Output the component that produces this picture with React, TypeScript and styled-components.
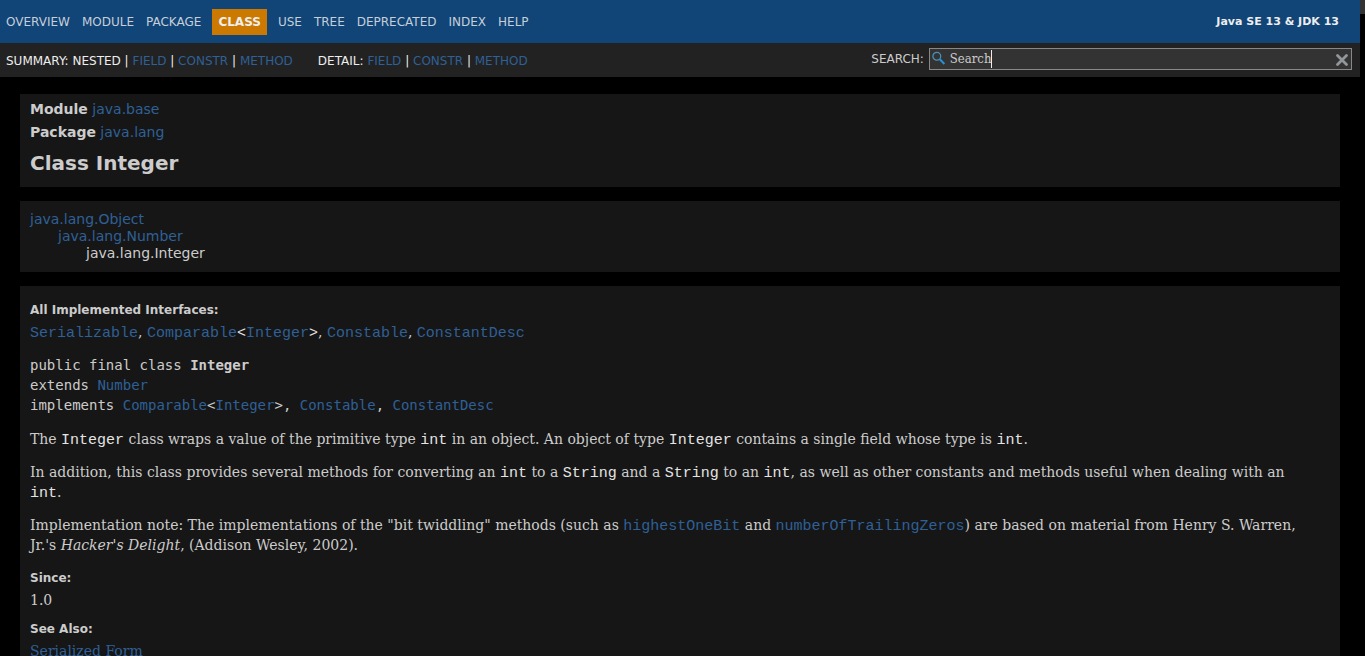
import React, { useState } from 'react';
import styled, { createGlobalStyle } from 'styled-components';

const sans = `'DejaVu Sans', Arial, Helvetica, sans-serif`;
const serif = `'DejaVu Serif', Georgia, serif`;
const narrowSerif = `'DejaVu Serif Condensed', 'DejaVu Serif', serif`;
const mono = `'DejaVu Sans Mono', monospace`;

const GlobalStyle = createGlobalStyle`
  * { box-sizing: border-box; }
  body {
    margin: 0;
    background: #000;
    color: #ccc;
    font-family: ${sans};
    font-size: 14px;
  }
  p, h1, ul, dl, dd, pre { margin: 0; padding: 0; }
  ul { list-style: none; }
`;

const Shell = styled.div`
  display: flex;
  height: 100vh;
  overflow: hidden;
`;

const Page = styled.div`
  flex: 1;
  min-width: 0;
  display: flex;
  flex-direction: column;
`;

const ScrollTrack = styled.div`
  flex: none;
  width: 5px;
  background: #000;
`;

const ScrollThumb = styled.div`
  height: 14px;
  background: #333;
`;

const Link = styled.a`
  color: #2f6096;
  text-decoration: none;
`;

const TopBar = styled.nav`
  flex: none;
  display: flex;
  justify-content: space-between;
  padding: 9px 21px 8px 0;
  background: #114477;
`;

const NavList = styled.ul`
  display: flex;
`;

const NavItem = styled.li<{ $active?: boolean }>`
  padding: 5px 6px;
  font-size: 12px;
  line-height: 16px;
  ${({ $active }) =>
    $active &&
    `margin: 0 5px; background: #cb7900; color: #eee; font-weight: bold;`}
`;

const NavLink = styled.a`
  color: #c5cfd9;
  text-decoration: none;
`;

const Release = styled.strong`
  padding: 5px 0;
  font-size: 11px;
  line-height: 16px;
  color: #eee;
`;

const SubBar = styled.div`
  flex: none;
  display: flex;
  justify-content: space-between;
  align-items: flex-start;
  padding: 5px 8px 5px 6px;
  background: #222;
  color: #eee;
  font-size: 12px;
  line-height: 22px;
`;

const SubNav = styled.div`
  display: flex;
  gap: 25px;
  padding-top: 2px;
`;

const SearchForm = styled.form`
  display: flex;
  gap: 5px;
  height: 22px;
  color: #ccc;
`;

const SearchBox = styled.div`
  display: flex;
  align-items: center;
  width: 31vw;
  height: 22px;
  padding: 0 2px;
  border: 1px solid #888;
  background: #333;
`;

const SearchInput = styled.input`
  field-sizing: content;
  height: 20px;
  margin-left: 4px;
  padding: 0;
  border: 0;
  outline: 0;
  background: transparent;
  color: #ccc;
  font-family: ${narrowSerif};
  font-size: 13px;
  line-height: 20px;
`;

const Caret = styled.span`
  width: 1px;
  height: 18px;
  background: #eee;
`;

const ClearButton = styled.button`
  display: flex;
  margin-left: auto;
  padding: 2px 0 0;
  border: 0;
  background: transparent;
`;

const Content = styled.main`
  flex: 1;
  min-height: 0;
  overflow: auto;
  scrollbar-width: none;
  display: flex;
  flex-direction: column;
  gap: 14px;
  padding: 17px 20px 0;
`;

const Card = styled.section`
  flex: none;
  padding: 4px 10px 9px;
  background: #161616;
`;

const SubTitle = styled.div`
  line-height: 23px;
`;

const Title = styled.h1`
  margin-top: 4px;
  font-size: 20px;
  line-height: 30px;
`;

const TreeCard = styled(Card)`
  padding: 10px;
  line-height: 17px;
`;

const Tree = styled.ul<{ $nested?: boolean }>`
  padding-left: ${({ $nested }) => ($nested ? 28 : 0)}px;
`;

const DescCard = styled(Card)`
  padding: 14px 30px 14px 10px;
`;

const Term = styled.dt`
  font-size: 12px;
  font-weight: bold;
  line-height: 20px;
`;

const Detail = styled.dd`
  padding-top: 2px;
  font-family: ${serif};
  line-height: 20px;

  &:not(:last-child) {
    padding-bottom: 9px;
  }
`;

const Signature = styled.pre`
  margin: 13px 0 14px;
  font-family: ${mono};
  font-size: 14px;
  line-height: 20px;
`;

const Paragraph = styled.p`
  margin-bottom: 13px;
  font-family: ${serif};
  line-height: 20px;
`;

const Code = styled.code<{ $linked?: boolean }>`
  color: ${({ $linked }) => ($linked ? 'inherit' : '#e4e4e4')};
  font-family: 'Liberation Mono', 'Courier New', monospace;
  font-size: 15px;
  line-height: 16px;
`;

const navBefore = ['OVERVIEW', 'MODULE', 'PACKAGE'];
const navAfter = ['USE', 'TREE', 'DEPRECATED', 'INDEX', 'HELP'];
const sections = ['FIELD', 'CONSTR', 'METHOD'];

const NavLinks = ({ names }: { names: string[] }) => (
  <>
    {names.map((n) => (
      <NavItem key={n}>
        <NavLink href="#">{n}</NavLink>
      </NavItem>
    ))}
  </>
);

const JumpLinks = () => (
  <>
    {sections.map((n, i) => (
      <React.Fragment key={n}>
        {i > 0 && ' | '}
        <Link href="#">{n}</Link>
      </React.Fragment>
    ))}
  </>
);

const CodeLink = ({ children }: { children: string }) => (
  <Link href="#">
    <Code $linked>{children}</Code>
  </Link>
);

export default function App() {
  const [query, setQuery] = useState('Search');
  return (
    <>
      <GlobalStyle />
      <Shell>
        <Page>
          <TopBar>
            <NavList>
              <NavLinks names={navBefore} />
              <NavItem $active>CLASS</NavItem>
              <NavLinks names={navAfter} />
            </NavList>
            <Release>Java SE 13 &amp; JDK 13</Release>
          </TopBar>
          <SubBar>
            <SubNav>
              <div>
                SUMMARY: NESTED | <JumpLinks />
              </div>
              <div>
                DETAIL: <JumpLinks />
              </div>
            </SubNav>
            <SearchForm onSubmit={(e) => e.preventDefault()}>
              <label htmlFor="search">SEARCH:</label>
              <SearchBox>
                <svg width="14" height="16" viewBox="0 0 14 16" fill="none" aria-hidden="true">
                  <circle cx="4.8" cy="5.3" r="3.9" stroke="#4a8fb5" strokeWidth="1.3" />
                  <path d="M7.8 8.3 12.4 13" stroke="#2492d6" strokeWidth="2" />
                </svg>
                <SearchInput
                  id="search"
                  type="text"
                  autoComplete="off"
                  value={query}
                  onChange={(e) => setQuery(e.target.value)}
                />
                <Caret />
                <ClearButton type="button" aria-label="Clear" onClick={() => setQuery('')}>
                  <svg width="14" height="14" viewBox="0 0 14 14" fill="none" aria-hidden="true">
                    <path d="M2.5 2.5 11.5 11.5M11.5 2.5 2.5 11.5" stroke="#92979b" strokeWidth="2.8" strokeLinecap="round" />
                  </svg>
                </ClearButton>
              </SearchBox>
            </SearchForm>
          </SubBar>
          <Content>
            <Card>
              <SubTitle><b>Module</b> <Link href="#">java.base</Link></SubTitle>
              <SubTitle><b>Package</b> <Link href="#">java.lang</Link></SubTitle>
              <Title>Class Integer</Title>
            </Card>
            <TreeCard>
              <Tree>
                <li>
                  <Link href="#">java.lang.Object</Link>
                  <Tree $nested>
                    <li>
                      <Link href="#">java.lang.Number</Link>
                      <Tree $nested>
                        <li>java.lang.Integer</li>
                      </Tree>
                    </li>
                  </Tree>
                </li>
              </Tree>
            </TreeCard>
            <DescCard>
              <dl>
                <Term>All Implemented Interfaces:</Term>
                <Detail>
                  <CodeLink>Serializable</CodeLink>, <CodeLink>Comparable</CodeLink>
                  <Code>&lt;</Code><CodeLink>Integer</CodeLink><Code>&gt;</Code>,{' '}
                  <CodeLink>Constable</CodeLink>, <CodeLink>ConstantDesc</CodeLink>
                </Detail>
              </dl>
              <Signature>
                public final class <b>Integer</b>{'\n'}
                extends <Link href="#">Number</Link>{'\n'}
                implements <Link href="#">Comparable</Link>&lt;<Link href="#">Integer</Link>&gt;,{' '}
                <Link href="#">Constable</Link>, <Link href="#">ConstantDesc</Link>
              </Signature>
              <Paragraph>
                The <Code>Integer</Code> class wraps a value of the primitive type <Code>int</Code> in
                an object. An object of type <Code>Integer</Code> contains a single field whose type
                is <Code>int</Code>.
              </Paragraph>
              <Paragraph>
                In addition, this class provides several methods for converting an <Code>int</Code> to
                a <Code>String</Code> and a <Code>String</Code> to an <Code>int</Code>, as well as
                other constants and methods useful when dealing with an <Code>int</Code>.
              </Paragraph>
              <Paragraph>
                Implementation note: The implementations of the "bit twiddling" methods (such
                as <CodeLink>highestOneBit</CodeLink> and <CodeLink>numberOfTrailingZeros</CodeLink>)
                are based on material from Henry S. Warren, Jr.'s <i>Hacker's Delight</i>, (Addison
                Wesley, 2002).
              </Paragraph>
              <dl>
                <Term>Since:</Term>
                <Detail>1.0</Detail>
                <Term>See Also:</Term>
                <Detail><Link href="#">Serialized Form</Link></Detail>
              </dl>
            </DescCard>
          </Content>
        </Page>
        <ScrollTrack>
          <ScrollThumb />
        </ScrollTrack>
      </Shell>
    </>
  );
}
